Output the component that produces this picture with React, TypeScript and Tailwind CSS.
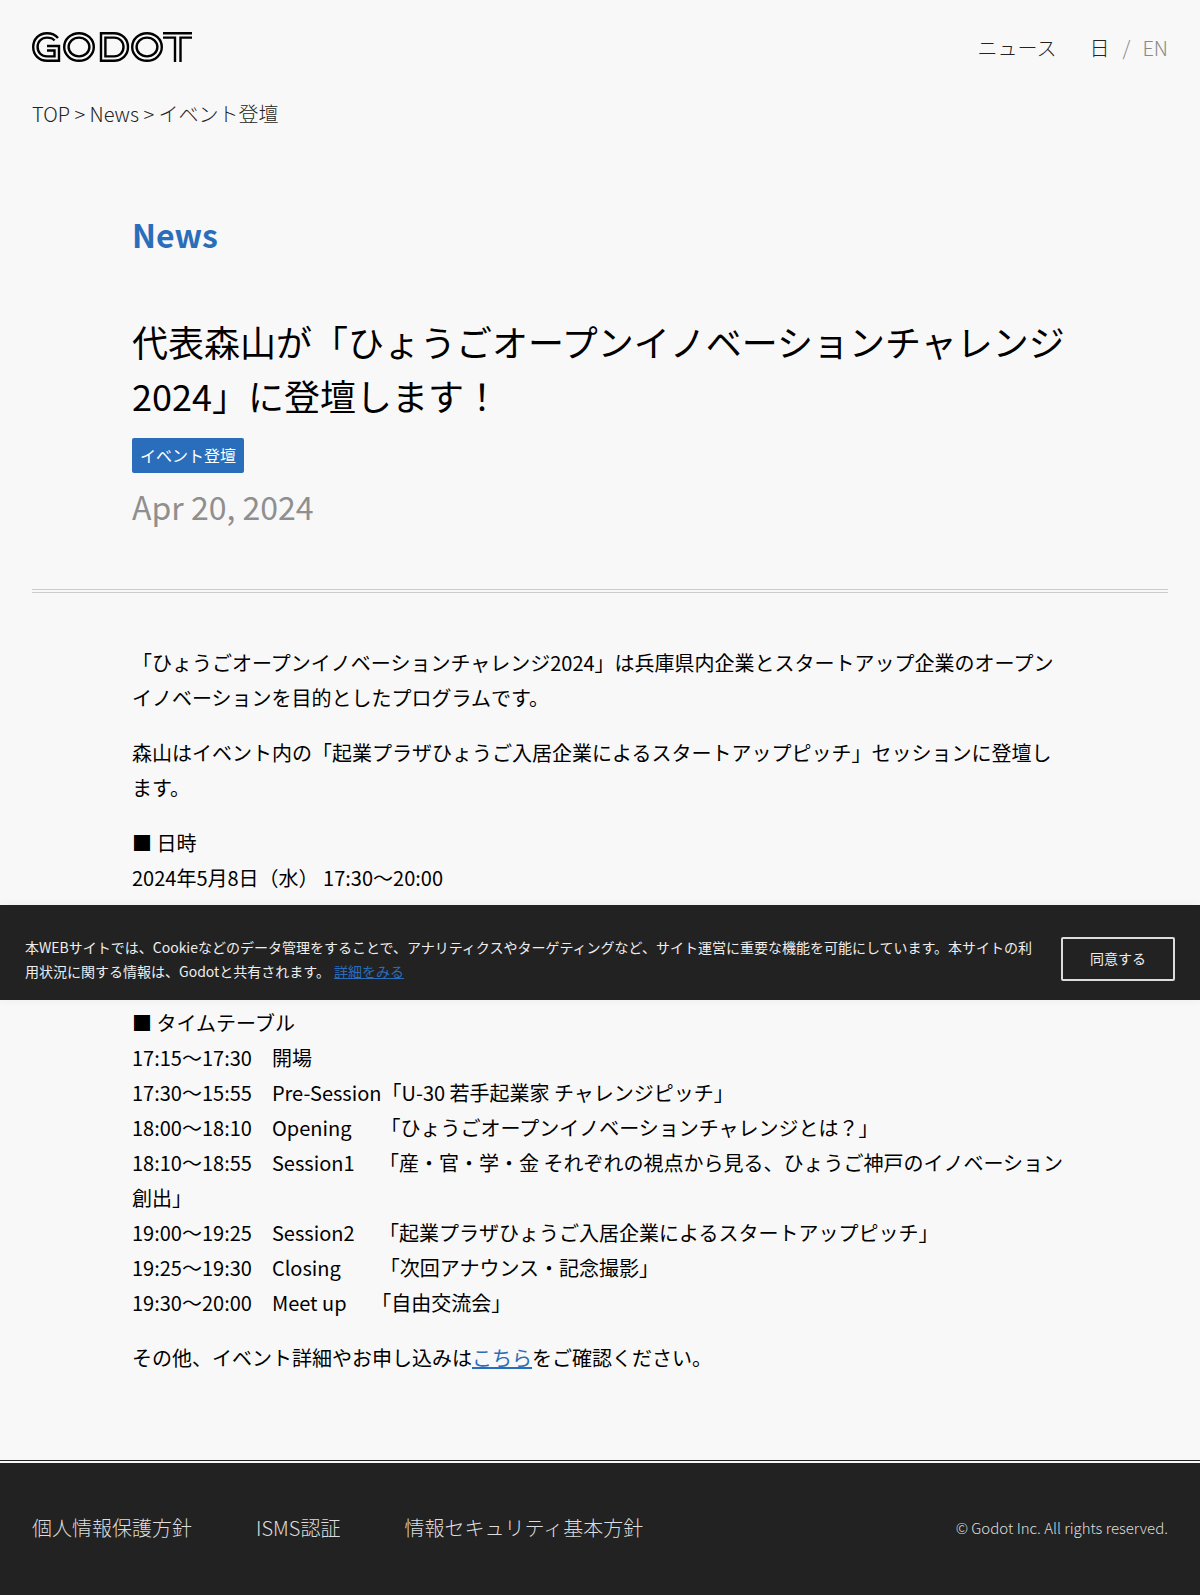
const sans = "font-['Noto_Sans_CJK_JP','Noto_Sans',sans-serif]";

function Logo() {
  return (
    <svg width="160" height="30" viewBox="0 0 160 30" fill="none" stroke="#000" strokeWidth="2.4" aria-label="GODOT">
      <path d="M26 6C23.5 3 19.5 1.2 15 1.2C7 1.2 1.2 7 1.2 15S7 28.8 15 28.8H27V14H15" />
      <path d="M22.5 8.5C21 6.5 18 5.6 15 5.6C9.5 5.6 5.6 9.5 5.6 15S9.5 24.4 15 24.4H22.5V18.5H15" />
      <ellipse cx="47" cy="15" rx="14.8" ry="13.8" />
      <ellipse cx="47" cy="15" rx="10.4" ry="9.4" />
      <path d="M69 1.2H82C90 1.2 96 7 96 15S90 28.8 82 28.8H69Z" />
      <path d="M73.4 5.6H82C87.5 5.6 91.5 9.5 91.5 15S87.5 24.4 82 24.4H73.4Z" />
      <ellipse cx="115" cy="15" rx="14.8" ry="13.8" />
      <ellipse cx="115" cy="15" rx="10.4" ry="9.4" />
      <path d="M131 1.2H160M131 5.6H143V30M160 5.6H148.5V30" />
    </svg>
  );
}

function P({ children }: { children: React.ReactNode }) {
  return <p className="mb-5">{children}</p>;
}

export default function App() {
  return (
    <div className={`${sans} relative bg-[#f8f8f8] text-black text-[20px] leading-[35px] min-h-[1595px]`}>
      <header className="flex items-center justify-between px-8 h-[94px]">
        <Logo />
        <nav className="flex items-center mt-[1px] font-light text-[20px] leading-[35px] text-[#222]">
          <span className="mr-[33px]">ニュース</span>
          <span>日</span>
          <span className="text-[#888] ml-[13px] mr-[12px]">/</span>
          <span className="text-[#888]">EN</span>
        </nav>
      </header>
      <div className="px-8 pt-[2px] font-light text-[#222] text-[20px] leading-[35px]">TOP &gt; News &gt; イベント登壇</div>

      <div className="mx-8 border-b-4 border-double border-[#ccc] pb-[59px] pt-[79px]">
        <div className="px-[100px]">
          <h2 className="text-[#2a6ebb] text-[32px] font-bold leading-[48px]">News</h2>
          <h1 className="mt-[56px] text-[36px] leading-[54px] font-normal text-black">代表森山が「ひょうごオープンイノベーションチャレンジ2024」に登壇します！</h1>
          <span className="inline-block mt-[16px] rounded-[2px] bg-[#2a6ebb] text-white text-[16px] leading-[35px] px-2">イベント登壇</span>
          <div className="text-[32px] leading-[48px] text-[#8f8f8f] mt-[9px]">Apr 20, 2024</div>
        </div>
      </div>

      <main className="px-[132px] pt-[52px] pb-[65px]">
        <P>「ひょうごオープンイノベーションチャレンジ2024」は兵庫県内企業とスタートアップ企業のオープンイノベーションを目的としたプログラムです。</P>
        <P>森山はイベント内の「起業プラザひょうご入居企業によるスタートアップピッチ」セッションに登壇します。</P>
        <P>■ 日時<br />2024年5月8日（水） 17:30～20:00</P>
        <div className="h-[70px] mb-5" />
        <P>
          ■ タイムテーブル<br />
          17:15～17:30　開場<br />
          17:30～15:55　Pre-Session「U-30 若手起業家 チャレンジピッチ」<br />
          18:00～18:10　Opening　&nbsp;&nbsp;「ひょうごオープンイノベーションチャレンジとは？」<br />
          18:10～18:55　Session1　 「産・官・学・金 それぞれの視点から見る、ひょうご神戸のイノベーション創出」<br />
          19:00～19:25　Session2　 「起業プラザひょうご入居企業によるスタートアップピッチ」<br />
          19:25～19:30　Closing　&nbsp;&nbsp;　「次回アナウンス・記念撮影」<br />
          19:30～20:00　Meet up　 「自由交流会」
        </P>
        <P>その他、イベント詳細やお申し込みは<a className="text-[#2a6ebb] underline">こちら</a>をご確認ください。</P>
      </main>

      <footer className="border-t-4 border-double border-[#222] bg-[#222] bg-clip-padding text-[#ddd] h-[135px] pb-[4px] flex items-center justify-between px-8 font-light">
        <div className="flex gap-16">
          <span>個人情報保護方針</span>
          <span>ISMS認証</span>
          <span>情報セキュリティ基本方針</span>
        </div>
        <span className="text-[15px]">© Godot Inc. All rights reserved.</span>
      </footer>

      <div className="absolute left-0 right-0 top-[905px] h-[95px] bg-[#222] text-[#eee] flex items-center justify-between px-[25px] pt-[12px] shadow-[0_0_10px_rgba(0,0,0,0.05)]">
        <p className="w-[1012px] text-[14px] leading-[24px]">
          本WEBサイトでは、Cookieなどのデータ管理をすることで、アナリティクスやターゲティングなど、サイト運営に重要な機能を可能にしています。本サイトの利用状況に関する情報は、Godotと共有されます。 <a className="text-[#2a6ebb] underline ml-px">詳細をみる</a>
        </p>
        <button className="w-[114px] h-[44px] border-2 border-[#ddd] rounded-[2px] text-[14px] text-[#eee]">同意する</button>
      </div>
    </div>
  );
}
